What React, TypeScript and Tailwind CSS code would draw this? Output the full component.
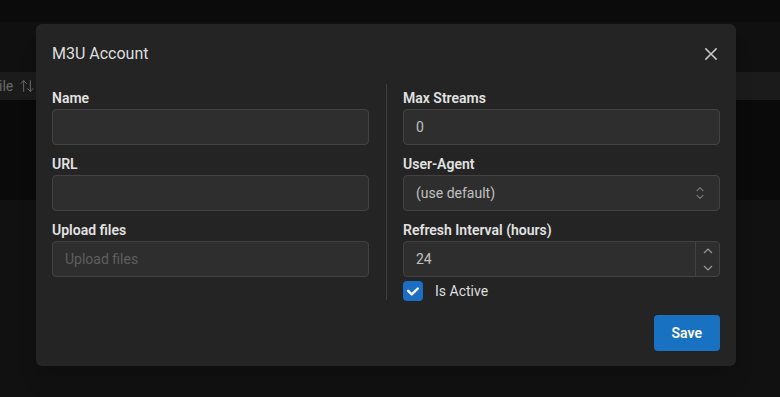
import { ArrowUpDown } from 'lucide-react';

const font = { fontFamily: 'Roboto, "Liberation Sans", sans-serif' };

function Label({ children }: { children: React.ReactNode }) {
  return (
    <div className="h-[22px] text-[14px] leading-[22px] font-semibold text-[#e2e2e2]">{children}</div>
  );
}

function Box({ children, dim = false }: { children?: React.ReactNode; dim?: boolean }) {
  return (
    <div
      className={`relative h-[36px] rounded-[4px] border border-[#424242] bg-[#2e2e2e] pl-[12px] flex items-center text-[14px] ${
        dim ? 'text-[#5e5e5e]' : 'text-[#c1c1c1]'
      }`}
    >
      {children}
    </div>
  );
}

function SelectChevron() {
  return (
    <svg width="20" height="20" viewBox="0 0 15 15" fill="#7a7a7a" className="absolute right-[9px] top-[7px]">
      <path d="M4.93179 5.43179C4.75605 5.60753 4.75605 5.89245 4.93179 6.06819C5.10753 6.24392 5.39245 6.24392 5.56819 6.06819L7.49999 4.13638L9.43179 6.06819C9.60753 6.24392 9.89245 6.24392 10.0682 6.06819C10.2439 5.89245 10.2439 5.60753 10.0682 5.43179L7.81819 3.18179C7.73379 3.0974 7.61933 3.04999 7.49999 3.04999C7.38064 3.04999 7.26618 3.0974 7.18179 3.18179L4.93179 5.43179ZM10.0682 9.56819C10.2439 9.39245 10.2439 9.10753 10.0682 8.93179C9.89245 8.75606 9.60753 8.75606 9.43179 8.93179L7.49999 10.8636L5.56819 8.93179C5.39245 8.75606 5.10753 8.75606 4.93179 8.93179C4.75605 9.10753 4.75605 9.39245 4.93179 9.56819L7.18179 11.8182C7.35753 11.9939 7.64245 11.9939 7.81819 11.8182L10.0682 9.56819Z" />
    </svg>
  );
}

function NumberControls() {
  return (
    <div className="absolute right-0 top-0 bottom-0 w-[24px] border-l border-[#424242] flex flex-col">
      <div className="flex-1 flex items-center justify-center">
        <svg width="10" height="6" viewBox="0 0 10 6" fill="none" stroke="#9a9a9a" strokeWidth="1.2">
          <path d="M1 5 L5 1 L9 5" />
        </svg>
      </div>
      <div className="flex-1 flex items-center justify-center">
        <svg width="10" height="6" viewBox="0 0 10 6" fill="none" stroke="#9a9a9a" strokeWidth="1.2">
          <path d="M1 1 L5 5 L9 1" />
        </svg>
      </div>
    </div>
  );
}

export default function App() {
  return (
    <div className="relative w-full h-[397px] overflow-hidden bg-[#111111]" style={font}>
      {/* page behind overlay */}
      <div className="h-[22px] bg-[#0b0b0b]" />
      <div className="h-[50px] bg-[#101010]" />
      <div className="h-[28px] bg-[#1b1b1b] flex items-center text-[14px] text-[#6a6a6a] gap-[6px]">
        <span className="-ml-[1px]">ile</span>
        <ArrowUpDown size={16} strokeWidth={1.5} color="#6a6a6a" />
      </div>
      <div className="h-[100px] bg-[#0a0a0a]" />

      {/* modal */}
      <div className="absolute left-[36px] top-[24px] w-[700px] rounded-[6px] bg-[#242424] shadow-xl">
        <div className="h-[60px] pl-[16px] pr-[15px] flex items-center justify-between">
          <span className="text-[16px] text-[#dedede]">M3U Account</span>
          <button className="w-[20px] h-[20px] flex items-center justify-center">
            <svg width="20" height="20" viewBox="0 0 15 15" fill="#c9c9c9">
              <path d="M11.7816 4.03157C12.0062 3.80702 12.0062 3.44295 11.7816 3.2184C11.5571 2.99385 11.193 2.99385 10.9685 3.2184L7.50005 6.68682L4.03164 3.2184C3.80708 2.99385 3.44301 2.99385 3.21846 3.2184C2.99391 3.44295 2.99391 3.80702 3.21846 4.03157L6.68688 7.49999L3.21846 10.9684C2.99391 11.193 2.99391 11.557 3.21846 11.7816C3.44301 12.0061 3.80708 12.0061 4.03164 11.7816L7.50005 8.31316L10.9685 11.7816C11.193 12.0061 11.5571 12.0061 11.7816 11.7816C12.0062 11.557 12.0062 11.193 11.7816 10.9684L8.31322 7.49999L11.7816 4.03157Z" />
            </svg>
          </button>
        </div>

        <div className="px-[16px] pb-[15px]">
          <div className="flex">
            <div className="w-[317px] pt-[3px] flex flex-col">
              <Label>Name</Label>
              <Box />
              <div className="mt-[8px]">
                <Label>URL</Label>
              </div>
              <Box />
              <div className="mt-[8px]">
                <Label>Upload files</Label>
              </div>
              <Box dim>Upload files</Box>
            </div>

            <div className="ml-[17px] mr-[16px] w-px bg-[#3e3e3e] mb-[1px]" />

            <div className="w-[317px] pt-[3px] flex flex-col">
              <Label>Max Streams</Label>
              <Box>0</Box>
              <div className="mt-[8px]">
                <Label>User-Agent</Label>
              </div>
              <Box>
                (use default)
                <SelectChevron />
              </Box>
              <div className="mt-[8px]">
                <Label>Refresh Interval (hours)</Label>
              </div>
              <Box>
                24
                <NumberControls />
              </Box>
              <div className="mt-[4px] flex items-center">
                <div className="w-[20px] h-[20px] rounded-[4px] bg-[#1c6ec4] flex items-center justify-center">
                  <svg width="12" height="9" viewBox="0 0 10 7" fill="#ffffff">
                    <path d="M4 4.586L1.707 2.293A1 1 0 1 0 .293 3.707l3 3a.997.997 0 0 0 1.414 0l5-5A1 1 0 1 0 8.293.293L4 4.586z" />
                  </svg>
                </div>
                <span className="ml-[12px] text-[14px] text-[#dedede] leading-[20px]">Is Active</span>
              </div>
            </div>
          </div>

          <div className="mt-[14px] flex justify-end">
            <button className="h-[36px] px-[18px] rounded-[4px] bg-[#1971c2] text-white text-[14px] font-semibold">
              Save
            </button>
          </div>
        </div>
      </div>
    </div>
  );
}
